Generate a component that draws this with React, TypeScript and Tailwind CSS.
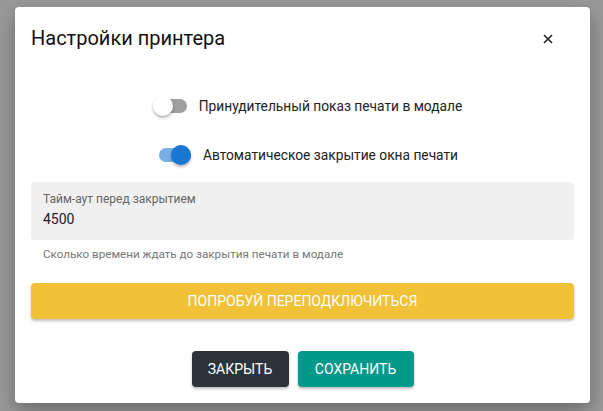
import { useState } from "react";

function Toggle({ on, onChange }: { on: boolean; onChange: () => void }) {
  return (
    <button
      type="button"
      onClick={onChange}
      className="relative h-[14px] w-[32px] shrink-0 rounded-full"
    >
      <span
        className={
          on
            ? "absolute inset-0 rounded-full bg-[#7aaee6]"
            : "absolute inset-0 rounded-full bg-[#9e9e9e]"
        }
      />
      <span
        className={
          on
            ? "absolute top-[-3px] left-[12px] h-[20px] w-[20px] rounded-full bg-[#1976d2] shadow-[0_2px_3px_rgba(0,0,0,0.3)]"
            : "absolute top-[-3px] left-[-2px] h-[20px] w-[20px] rounded-full bg-white shadow-[0_2px_3px_rgba(0,0,0,0.3)]"
        }
      />
    </button>
  );
}

export default function App() {
  const [forceModal, setForceModal] = useState(false);
  const [autoClose, setAutoClose] = useState(true);
  const [timeout, setTimeoutValue] = useState("4500");

  return (
    <main className="flex h-[411px] w-[603px] items-start justify-center bg-[#999999] pt-[7px] pl-[2px] font-['Roboto',sans-serif]">
      <section className="w-[575px] rounded-[4px] bg-white shadow-[0_8px_20px_rgba(0,0,0,0.3)]">
        <div className="flex items-center justify-between pl-[16px] pr-4 pt-[17px] pb-[20px]">
          <h1 className="text-[20px] leading-[28px] text-[#111]">Настройки принтера</h1>
          <button type="button" className="mr-[21px] mt-[2px] text-[#222]">
            <svg width="10" height="10" viewBox="0 0 10 10">
              <path d="M1 1L9 9M9 1L1 9" stroke="currentColor" strokeWidth="1.6" />
            </svg>
          </button>
        </div>

        <div className="flex flex-col items-center gap-[28px] pt-[24px] pl-[12px]">
          <label className="flex items-center gap-[12px] text-[13.75px] text-[#222]">
            <Toggle on={forceModal} onChange={() => setForceModal(!forceModal)} />
            Принудительный показ печати в модале
          </label>
          <label className="flex items-center gap-[12px] text-[13.75px] text-[#222]">
            <Toggle on={autoClose} onChange={() => setAutoClose(!autoClose)} />
            Автоматическое закрытие окна печати
          </label>
        </div>

        <div className="px-4 pt-[17px]">
          <div className="rounded-[4px] bg-[#f0f0f0] px-3 pt-[9px] pb-[9px]">
            <label className="block text-[12px] leading-[16px] text-[#666]" htmlFor="timeout">
              Тайм-аут перед закрытием
            </label>
            <input
              id="timeout"
              value={timeout}
              onChange={(event) => setTimeoutValue(event.target.value)}
              className="mt-[2px] w-full bg-transparent text-[14px] leading-[20px] text-[#222] outline-none"
            />
          </div>
          <p className="px-3 pt-[6px] text-[11.65px] leading-[16px] text-[#777]">
            Сколько времени ждать до закрытия печати в модале
          </p>

          <button
            type="button"
            className="mt-[21px] h-[36px] w-full rounded-[4px] bg-[#f1c137] text-[14px] uppercase text-white shadow-[0_2px_3px_rgba(0,0,0,0.25)]"
          >
            Попробуй переподключиться
          </button>
        </div>

        <div className="flex justify-center gap-[9px] pt-[32px] pb-[16px]">
          <button
            type="button"
            className="h-[36px] w-[97px] rounded-[4px] bg-[#2c333a] text-[14px] uppercase text-white shadow-[0_2px_3px_rgba(0,0,0,0.25)]"
          >
            Закрыть
          </button>
          <button
            type="button"
            className="h-[36px] w-[116px] rounded-[4px] bg-[#00998a] text-[14px] uppercase text-white shadow-[0_2px_3px_rgba(0,0,0,0.25)]"
          >
            Сохранить
          </button>
        </div>
      </section>
    </main>
  );
}
